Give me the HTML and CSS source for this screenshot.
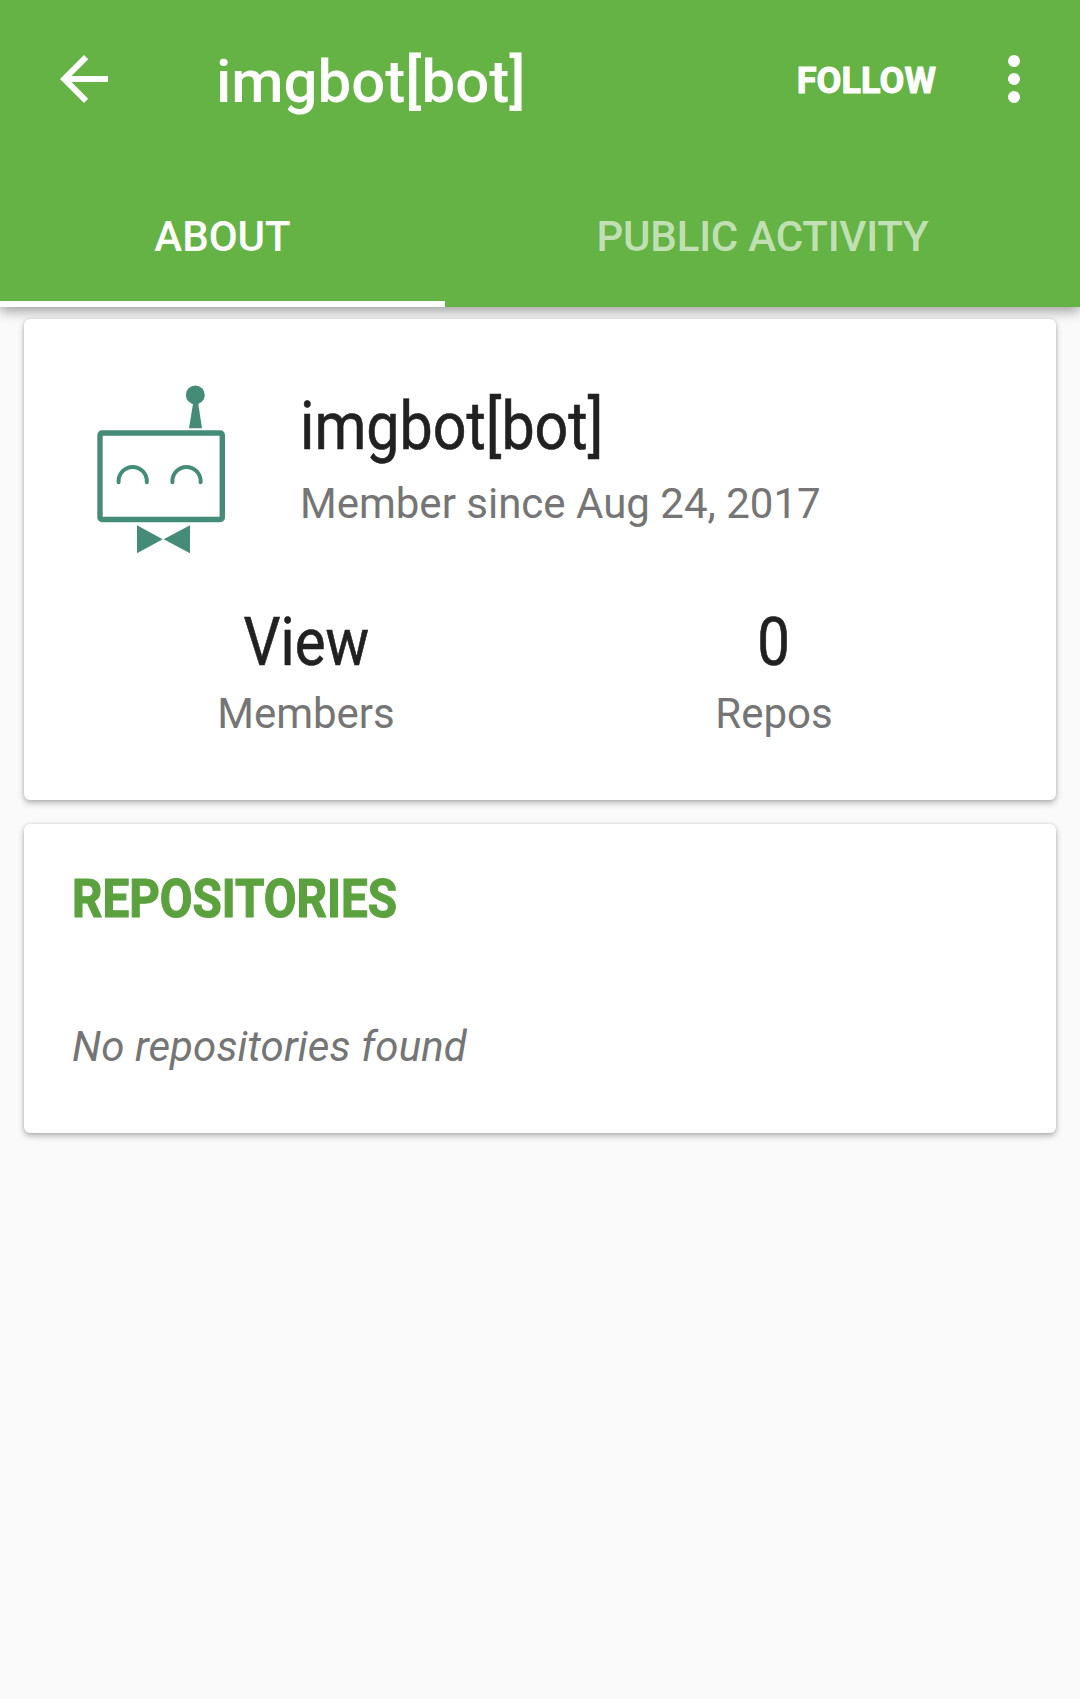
FILE: index.html
```html
<!DOCTYPE html>
<html lang="en">
<head>
<meta charset="utf-8">
<title>imgbot[bot]</title>
<link rel="stylesheet" href="styles.css">
</head>
<body>
<header class="appbar">
  <div class="toolbar">
    <svg class="back" viewBox="0 0 48 48"><path d="M48 21H11.500L28.200 4.200L24 0L0 24L24 48L28.200 43.800L11.500 27H48Z"/></svg>
    <h1 class="title">imgbot[bot]</h1>
    <span class="follow">FOLLOW</span>
    <svg class="more" viewBox="0 0 12 48"><circle cx="6" cy="6" r="6"/><circle cx="6" cy="24" r="6"/><circle cx="6" cy="42" r="6"/></svg>
  </div>
  <nav class="tabs"><div class="tab active">ABOUT</div><div class="tab other">PUBLIC ACTIVITY</div></nav>
</header>
<main class="content">
  <section class="card profile">
    <div class="identity">
      <svg class="avatar" viewBox="0 0 132 170">
        <g fill="#448b78"><circle cx="98.300" cy="9.900" r="9.500"/><path d="M96.300 17h4.700l4 26.200H92ZM40 140.300L65.700 154.300L40 168.300ZM93 140.300L66.700 154.300L93 168.300Z"/></g>
        <g fill="none" stroke="#448b78"><rect x="3" y="48" width="122.300" height="86.500" rx="2" stroke-width="5.400"/><path d="M21.600 97.300v-1.200a14.100 14.100 0 0 1 28.200 0v1.200M75.400 97.300v-1.200a14.100 14.100 0 0 1 28.200 0v1.200" stroke-width="4" stroke-linecap="round"/></g>
      </svg>
      <div class="who"><h2 class="name"><span class="condensed">imgbot[bot]</span></h2><p class="since">Member since Aug 24, 2017</p></div>
    </div>
    <div class="stats">
      <div class="stat"><div class="value"><span class="condensed">View</span></div><div class="label">Members</div></div>
      <div class="stat"><div class="value"><span class="condensed">0</span></div><div class="label">Repos</div></div>
    </div>
  </section>
  <section class="card repos"><h2 class="heading"><span class="condensed">REPOSITORIES</span></h2><p class="empty">No repositories found</p></section>
</main>
</body>
</html>
```
FILE: styles.css
```css
* { box-sizing: border-box; margin: 0; }
body { background: #fafafa; font-family: Roboto, sans-serif; color: #212121; min-height: 1699px; }
.condensed { display: inline-block; transform: scaleX(.88); white-space: nowrap; -webkit-text-stroke: .6px currentColor; }
.name .condensed { transform: scaleX(.896); transform-origin: left center; }
.heading .condensed { transform-origin: left center; -webkit-text-stroke-width: 1.2px; }
.appbar { height: 307px; background: #65b345; color: #fff; box-shadow: 0 4px 12px rgba(0,0,0,.38); }
.toolbar { height: 163px; display: flex; align-items: center; padding: 0 60px; }
.back { width: 48px; height: 48px; fill: #fff; margin-bottom: 5px; }
.title { margin-left: 108px; font-size: 60px; font-weight: 500; flex: 1; }
.follow { font-size: 36px; font-weight: 700; margin-bottom: 2px; letter-spacing: .1px; -webkit-text-stroke: 1px currentColor; }
.more { width: 12px; height: 48px; fill: #fff; margin: 0 0 5px 72px; }
.tabs { display: flex; height: 144px; font-size: 42px; font-weight: 500; }
.tab { display: flex; align-items: center; justify-content: center; }
.active { width: 445px; border-bottom: 6px solid #fff; padding-top: 8px; }
.other { flex: 1; color: rgba(255,255,255,.6); letter-spacing: -.2px; padding-top: 2px; }
.content { padding: 12px 24px; }
.card { background: #fff; border-radius: 6px; box-shadow: 0 3px 6px rgba(0,0,0,.28), 0 0 3px rgba(0,0,0,.12); }
.profile { height: 481px; padding-top: 66px; }
.identity { display: flex; padding-left: 73px; height: 219px; }
.avatar { width: 132px; height: 170px; }
.who { margin-left: 71px; padding-top: 3px; }
.name { font-size: 66px; line-height: 78px; font-weight: 400; }
.since { margin-top: 13px; font-size: 42px; line-height: 50px; color: #757575; }
.stats { display: flex; padding: 0 48px; }
.stat { flex: 1; text-align: center; }
.value { font-size: 66px; line-height: 78px; }
.label { margin-top: 7px; font-size: 42px; line-height: 50px; color: #757575; }
.repos { height: 309px; margin-top: 24px; padding: 43px 48px; }
.heading { font-size: 54px; line-height: 63px; font-weight: 700; color: #5ba23f; }
.empty { margin-top: 92px; font-size: 42px; line-height: 50px; font-style: italic; letter-spacing: .1px; color: #757575; }
```
